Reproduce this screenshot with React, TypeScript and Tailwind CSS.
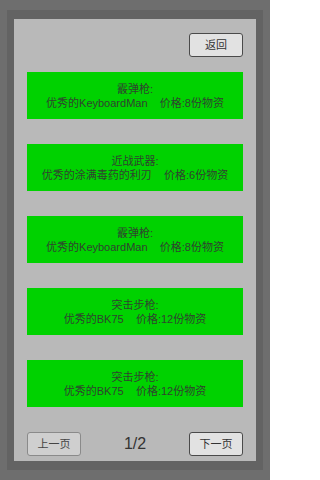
const items = [
  { kind: "霰弹枪:", name: "优秀的KeyboardMan", price: "价格:8份物资" },
  { kind: "近战武器:", name: "优秀的涂满毒药的利刃", price: "价格:6份物资" },
  { kind: "霰弹枪:", name: "优秀的KeyboardMan", price: "价格:8份物资" },
  { kind: "突击步枪:", name: "优秀的BK75", price: "价格:12份物资" },
  { kind: "突击步枪:", name: "优秀的BK75", price: "价格:12份物资" },
];

const font = { fontFamily: '"Liberation Sans", "Noto Sans CJK SC", sans-serif' };

export default function App() {
  return (
    <div className="w-[270px] h-[480px] bg-[#6e6e6e] pt-[10px] pb-[10px] px-[7px]" style={font}>
      <div className="h-full bg-[#636363] px-[7px] pt-[9px] pb-[9px]">
        <div className="h-full bg-[#b9b9b9] flex flex-col px-[13px] pt-[14px]">
          <div className="flex justify-end">
            <button className="w-[54px] h-[24px] bg-[#e2e2e2] border border-[#4a4a4a] rounded-[3px] text-[11px] text-[#333] leading-none">
              返回
            </button>
          </div>
          <div className="flex flex-col gap-[25px] mt-[15px]">
            {items.map((it, i) => (
              <div
                key={i}
                className="h-[47px] bg-[#00d200] flex flex-col items-center justify-center text-[11px] leading-[14px] text-[#2f432f]"
              >
                <div>{it.kind}</div>
                <div className="whitespace-pre">{it.name + "    " + it.price}</div>
              </div>
            ))}
          </div>
          <div className="flex items-center justify-between mt-[25px]">
            <button className="w-[54px] h-[24px] bg-[#cfcfcf] border border-[#8a8a8a] rounded-[3px] text-[11px] text-[#444] leading-none">
              上一页
            </button>
            <span className="text-[16px] text-[#333]">1/2</span>
            <button className="w-[54px] h-[24px] bg-[#e2e2e2] border border-[#4a4a4a] rounded-[3px] text-[11px] text-[#333] leading-none">
              下一页
            </button>
          </div>
        </div>
      </div>
    </div>
  );
}
